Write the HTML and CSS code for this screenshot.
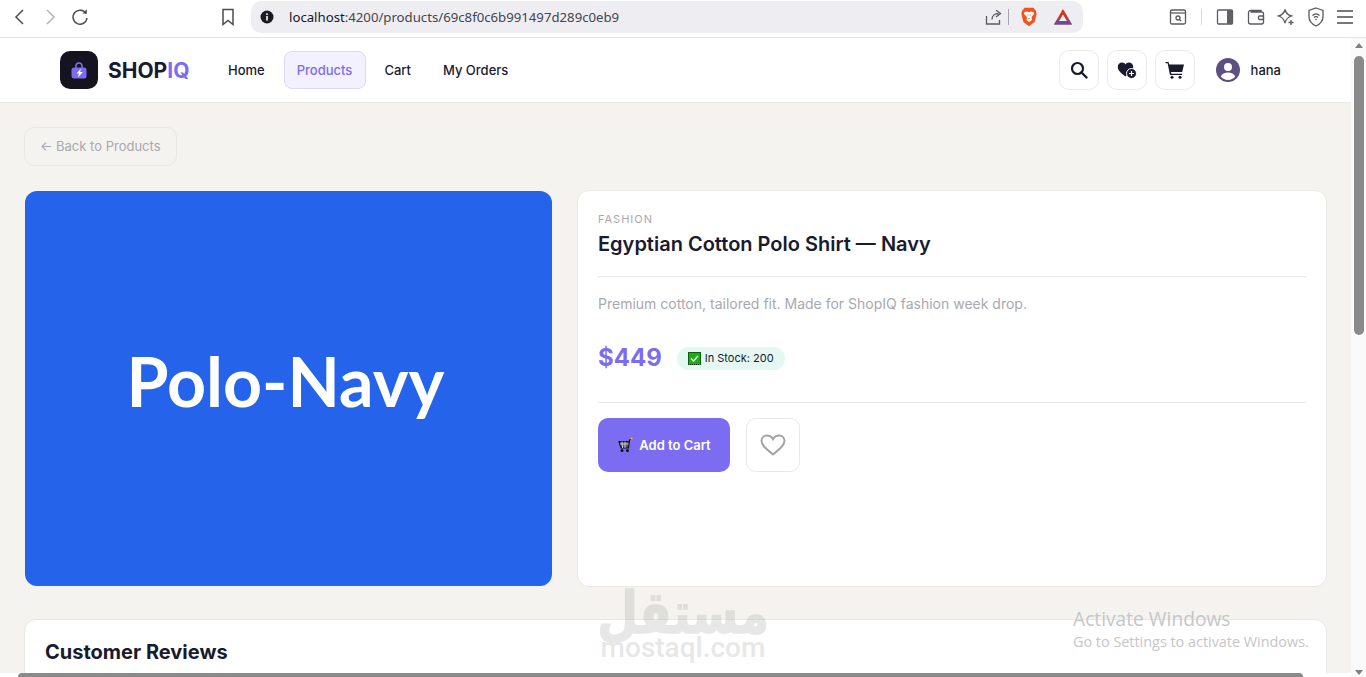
FILE: index.html
```html
<!DOCTYPE html>
<html lang="en">
<head>
<meta charset="utf-8">
<title>ShopIQ</title>
<link rel="stylesheet" href="styles.css">
</head>
<body>
<div class="toolbar">
  <div class="tb-left">
    <svg class="tb-ic" width="16" height="18" viewBox="0 0 16 18"><path d="M11 2 4 9l7 7" class="st-dark"/></svg>
    <svg class="tb-ic" width="16" height="18" viewBox="0 0 16 18"><path d="m5 2 7 7-7 7" class="st-light"/></svg>
    <svg class="tb-ic" width="20" height="20" viewBox="0 0 20 20"><path d="M16 6.500A7 7 0 1 0 17 11" class="st-dark"/><path d="M12.500 6.500h4.300v-4.300z" class="fill-dark"/></svg>
  </div>
  <svg class="tb-bookmark" width="16" height="18" viewBox="0 0 16 18"><path d="M3 1.500h10v15l-5-4-5 4z" class="st-dark"/></svg>
  <div class="urlbar">
    <svg class="info" width="14" height="14" viewBox="0 0 14 14"><circle cx="7" cy="7" r="6.500" fill="#1b1b22"/><rect x="6.200" y="6" width="1.600" height="4.500" fill="#fff"/><rect x="6.200" y="3.400" width="1.600" height="1.600" fill="#fff"/></svg>
    <span class="url">localhost<span class="url-dim">:4200/products/69c8f0c6b991497d289c0eb9</span></span>
    <svg class="share" width="18" height="18" viewBox="0 0 18 18"><path d="M7 11.500C7 8 9.500 5.500 13.500 5.500M11 2.200l4.500 3.300L11 9M1.500 8v8h13v-4" class="st-gray"/></svg>
    <span class="tb-sep"></span>
    <svg class="brave" width="16" height="20" viewBox="0 0 16 20"><path d="M3.500.8h9L15 4l.6 3-2 8-5.600 4.200L2.400 15l-2-8L1 4z" fill="#f1531f"/><path d="M3.500 5 6 4.500l2 .8 2-.8 2.500.5.500 2-2.500 3 .5 3L8 15l-2.500-2 .5-3L3 7z" fill="#fff"/><path d="M6.300 7.500h1v1h-1zM8.700 7.500h1v1h-1zM7 11h2l-1 1.200z" fill="#f1531f"/></svg>
    <svg class="bat" width="20" height="18" viewBox="0 0 20 18"><path d="M10 1 19 16.500H1z" fill="#c9381c"/><path d="M1 16.500 4 12h12l3 4.500z" fill="#5f4f9e"/><path d="M10 6.500 14 13H6z" fill="#eeedf2"/></svg>
  </div>
  <div class="tb-right">
    <svg width="18" height="18" viewBox="0 0 18 18"><rect x="1.500" y="2" width="15" height="14" rx="1.500" class="st-gray"/><path d="M1.500 5h15" class="st-gray"/><circle cx="9" cy="10" r="2" class="st-gray"/><path d="m10.500 11.500 1.500 1.500" class="st-gray"/></svg>
    <span class="tb-sep light"></span>
    <svg class="tb-panel" width="18" height="18" viewBox="0 0 18 18"><rect x="1.500" y="2" width="15" height="14" rx="1" class="st-gray"/><rect x="11" y="2" width="5.500" height="14" fill="#606066"/></svg>
    <svg width="18" height="18" viewBox="0 0 18 18"><path d="M14 4V2.500H3.500a2 2 0 0 0-2 2V14a2 2 0 0 0 2 2h11a2 2 0 0 0 2-2V6a2 2 0 0 0-2-2H3.500" class="st-gray"/><rect x="11.500" y="8" width="5" height="3.500" rx="1" class="st-gray"/></svg>
    <svg width="18" height="18" viewBox="0 0 18 18"><path d="M8 1.500c.8 4 2.500 5.500 6.500 6.500-3.500 1-5.500 2.800-6.500 7-1-4.200-3-6-6.500-7C5.500 7 7.200 5.500 8 1.500z" class="st-gray"/><path d="M14 12v5M11.500 14.500h5" class="st-gray"/></svg>
    <svg width="18" height="20" viewBox="0 0 18 20"><path d="M9 1 16 3.500V10c0 4-3 7-7 9-4-2-7-5-7-9V3.500z" class="st-gray"/><path d="M5.500 8.500c2-2 5-2 7 0M7 10.500c1-1 3-1 4 0" class="st-gray"/><circle cx="9" cy="12.500" r=".8" fill="#55555c"/></svg>
    <svg class="tb-menu" width="18" height="16" viewBox="0 0 18 16"><path d="M1 2h16M1 8h16M1 14h16" class="st-gray wide"/></svg>
  </div>
</div>

<div class="viewport">
  <div class="page-col">
    <div class="page">
      <header class="nav">
        <div class="logo-wrap">
          <div class="logo-box">
            <svg width="18" height="18" viewBox="0 0 18 18"><path d="M6 7V5a3 3 0 0 1 6 0v2" fill="none" stroke="#7c6cf2" stroke-width="1.600"/><rect x="1.500" y="6.500" width="15" height="11" rx="2.500" fill="#7c6cf2"/><path d="M11 7.500 6.500 12.500H9l-1 4 4.800-5.500H10z" fill="#fff"/></svg>
          </div>
          <span class="logo-text">SHOP<span class="logo-iq">IQ</span></span>
        </div>
        <nav class="links">
          <a class="link">Home</a>
          <a class="link active">Products</a>
          <a class="link">Cart</a>
          <a class="link">My Orders</a>
        </nav>
        <div class="nav-right">
          <button class="icon-btn"><svg width="18" height="18" viewBox="0 0 18 18"><circle cx="7.500" cy="7.500" r="5.500" fill="none" stroke="#1a1a2e" stroke-width="2.200"/><path d="m11.500 11.500 5 5" stroke="#1a1a2e" stroke-width="2.400" stroke-linecap="round"/></svg></button>
          <button class="icon-btn"><svg width="20" height="18" viewBox="0 0 20 18"><path d="M8.500 15.500C3 11.500.8 9 .8 5.800.8 3.300 2.700 1.500 5 1.500c1.500 0 2.700.7 3.500 1.900.8-1.200 2-1.900 3.500-1.900 2.300 0 4.200 1.800 4.200 4.300 0 3.200-2.200 5.700-7.700 9.700z" fill="#1a1a2e"/><circle cx="14.500" cy="12.500" r="5" fill="#1a1a2e" stroke="#fff" stroke-width="1"/><path d="M14.500 10v5M12 12.500h5" stroke="#fff" stroke-width="1.200"/></svg></button>
          <button class="icon-btn"><svg width="20" height="18" viewBox="0 0 20 18"><path d="M.5 1H3.500l.8 2.500H19l-1.800 7.500H6l.4 1.700H17v1.300H5L2.600 2.300H.5z" fill="#1a1a2e"/><circle cx="7" cy="16.300" r="1.500" fill="#1a1a2e"/><circle cx="15" cy="16.300" r="1.500" fill="#1a1a2e"/></svg></button>
          <div class="user">
            <svg width="24" height="24" viewBox="0 0 24 24"><circle cx="12" cy="12" r="12" fill="#5b5080"/><circle cx="12" cy="9" r="4" fill="#fff"/><path d="M4.800 18.500c1.500-3 4-4 7.200-4s5.700 1 7.200 4A9.500 9.500 0 0 1 12 22a9.500 9.500 0 0 1-7.200-3.500z" fill="#fff"/></svg>
            <span class="user-name">hana</span>
          </div>
        </div>
      </header>
      <main class="content">
        <a class="back">← Back to Products</a>
        <section class="product">
          <div class="hero"><span class="hero-text">Polo-Navy</span></div>
          <div class="card info-card">
            <div class="cat">FASHION</div>
            <h1 class="title">Egyptian Cotton Polo Shirt — Navy</h1>
            <hr class="rule rule-a">
            <p class="desc">Premium cotton, tailored fit. Made for ShopIQ fashion week drop.</p>
            <div class="price-row">
              <span class="price">$449</span>
              <span class="stock"><svg class="check" width="13" height="13" viewBox="0 0 13 13"><rect width="13" height="13" fill="#19b012"/><path d="M0 12.500h13" stroke="#111" stroke-dasharray="1 1"/><path d="M0 .5h13M.5 0v13M12.500 0v13" stroke="#0b5f08"/><path d="m3 6.500 2.500 2.500L10 4" fill="none" stroke="#fff" stroke-width="1.400"/></svg>In Stock: 200</span>
            </div>
            <hr class="rule rule-b">
            <div class="actions">
              <button class="add"><svg width="16" height="16" viewBox="0 0 16 16"><path d="M15 1.500 12.500 3 11.500 11H4L2 4.500h9.500" fill="#56576a" stroke="#111" stroke-width="1.200"/><path d="M3 7h8.500M5 4.500 5.500 11M8 4.500V11" stroke="#ddd" stroke-width=".8"/><circle cx="5" cy="13.500" r="1.500" fill="#111"/><circle cx="10.500" cy="13.500" r="1.500" fill="#111"/><circle cx="14.500" cy="1.500" r="1.200" fill="#f0a040"/></svg>Add to Cart</button>
              <button class="wish"><svg width="26" height="24" viewBox="0 0 26 24"><path d="M13 21.500C5 15 1.500 12 1.500 7.800 1.500 4.500 4 2.500 7 2.500c2.500 0 4.700 1.400 6 3.700 1.300-2.300 3.500-3.700 6-3.700 3 0 5.500 2 5.500 5.300 0 4.200-3.500 7.200-11.500 13.700z" fill="none" stroke="#a3a3a3" stroke-width="2"/></svg></button>
            </div>
          </div>
        </section>
        <section class="card reviews">
          <h2 class="reviews-title">Customer Reviews</h2>
        </section>
      </main>
    </div>
    <div class="hbar"><span class="hbar-left"></span><span class="hthumb"></span><span class="hbar-right"></span></div>
  </div>
  <div class="vbar"><span class="varrow up"></span><span class="vthumb"></span><span class="vspace"></span><span class="varrow down"></span></div>
  <div class="watermark">
    <div class="wm-ar" lang="ar" dir="rtl">مستقل</div>
    <div class="wm-en">mostaql.com</div>
  </div>
  <div class="activate">
    <div class="act-1">Activate Windows</div>
    <div class="act-2">Go to Settings to activate Windows.</div>
  </div>
</div>
</body>
</html>
```

FILE: styles.css
```css
* { box-sizing: border-box; }
html, body { margin: 0; height: 100%; overflow: hidden; }
body { width: 1366px; height: 677px; display: flex; flex-direction: column; background: #fff; font-family: Inter, "Liberation Sans", sans-serif; color: #1a1a2e; }

.toolbar { height: 38px; flex: none; display: flex; align-items: center; background: #fff; border-bottom: 1px solid #e3e3e6; padding-bottom: 4px; position: relative; }
.tb-left { display: flex; align-items: center; gap: 14px; margin-left: 12px; width: 208px; }
.tb-left .tb-ic:last-child { margin-left: -2px; }
.tb-bookmark { margin-right: 15px; flex: none; }
.st-dark { fill: none; stroke: #4c4c52; stroke-width: 1.500; }
.st-light { fill: none; stroke: #b4b4b8; stroke-width: 1.500; }
.st-gray { fill: none; stroke: #5a5a60; stroke-width: 1.300; }
.st-gray.wide { stroke-width: 2; stroke: #77777c; }
.fill-dark { fill: #4c4c52; }
.urlbar { width: 832px; height: 32px; background: #eeedf2; border-radius: 10px; display: flex; align-items: center; padding: 0 10px 0 9px; flex: none; }
.info { flex: none; margin-right: 15px; }
.url { font-family: "Noto Sans", "Liberation Sans", sans-serif; font-size: 13.200px; color: #17171c; flex: 1; }
.url-dim { color: #45454c; }
.share { flex: none; margin-right: 5px; }
.tb-sep { width: 1px; height: 16px; background: #a4a4aa; flex: none; margin-right: 12px; }
.brave { flex: none; margin-right: 16px; }
.bat { flex: none; }
.tb-right { display: flex; align-items: center; margin-left: 86px; gap: 12px; }
.tb-sep.light { background: #d8d8dc; margin: 0 2px; }
.tb-panel { margin-right: 1px; }
.tb-menu { margin-left: -1px; }

.viewport { flex: 1; display: flex; min-height: 0; position: relative; }
.page-col { width: 1351px; flex: none; display: flex; flex-direction: column; min-height: 0; }
.page { flex: 1; min-height: 0; overflow: hidden; background: #f4f3ef; }

.nav { height: 65px; background: #fff; border-bottom: 1px solid #e9e8e5; padding-left: 60px; display: flex; align-items: center; }
.logo-wrap { display: flex; align-items: center; gap: 10px; width: 155px; flex: none; }
.logo-box { width: 38px; height: 38px; border-radius: 10px; background: #14131f; display: flex; align-items: center; justify-content: center; }
.logo-text { font-size: 21px; font-weight: 700; color: #1a1a2e; }
.logo-iq { color: #7c6cf2; }
.links { display: flex; align-items: center; gap: 6px; }
.link { font-size: 13px; font-weight: 500; color: #1a1a2e; padding: 0 12px; height: 38px; display: flex; align-items: center; border-radius: 8px; border: 1px solid transparent; }
.link.active { background: #f3f1ff; border-color: #dcd7fb; color: #7c6cf2; padding-right: 13px; margin-right: -1px; }
.nav-right { margin-left: auto; display: flex; align-items: center; gap: 8px; padding-right: 70px; }
.icon-btn { width: 40px; height: 40px; border: 1px solid #ebeae7; border-radius: 10px; background: #fff; padding: 0; display: flex; align-items: center; justify-content: center; }
.user { display: flex; align-items: center; gap: 11px; margin-left: 13px; }
.user-name { font-size: 13px; font-weight: 500; }

.content { padding: 24px 24px 0 24px; }
.back { display: inline-flex; align-items: center; height: 39px; padding: 0 15px 2px; border: 1px solid #e9e8e5; border-radius: 10px; font-size: 13px; color: #a8a8b0; }
.product { display: grid; grid-template-columns: 528px 750px; gap: 25px; margin-top: 24px; height: 397px; }
.hero { margin: 1px 0; margin-left: 1px; background: #2563eb; border-radius: 12px; display: flex; align-items: center; justify-content: center; }
.hero-text { font-family: Lato, sans-serif; font-weight: 700; font-size: 68px; color: #fff; line-height: 1; padding: 0 6px 15px 0; }
.card { background: #fff; border: 1px solid #e9e8e5; border-radius: 12px; }
.info-card { padding: 20px; display: flex; flex-direction: column; }
.cat { font-size: 11px; font-weight: 400; letter-spacing: 1px; color: #a8a8b0; line-height: 16px; }
.title { font-size: 20px; font-weight: 600; margin: 4px 0 0; line-height: 26px; color: #1a1a2e; }
.rule { border: 0; border-top: 1px solid #e9e8e5; margin: 0; width: 100%; }
.rule-a { margin-top: 19px; }
.desc { font-size: 14px; color: #a8a8b0; margin: 17px 0 0; line-height: 20px; }
.price-row { display: flex; align-items: center; gap: 15px; margin-top: 28px; height: 30px; }
.price { font-size: 24px; font-weight: 700; color: #7c6cf2; }
.stock { display: inline-flex; align-items: center; gap: 4px; height: 23px; margin-top: 2px; padding: 0 11px; background: #e5f7f2; border-radius: 12px; font-size: 11px; font-weight: 400; color: #1a1a2e; }
.check { flex: none; }
.rule-b { margin-top: 30px; }
.actions { display: flex; gap: 16px; margin-top: 15px; }
.add { width: 132px; height: 54px; background: #7c6cf2; border: 0; border-radius: 10px; font: 600 13px Inter, sans-serif; color: #fff; display: flex; align-items: center; justify-content: center; gap: 6px; padding: 0; }
.wish { width: 54px; height: 54px; background: #fff; border: 1px solid #e9e8e5; border-radius: 10px; padding: 0; display: flex; align-items: center; justify-content: center; }
.reviews { margin-top: 32px; padding: 20px; height: 200px; width: 1303px; }
.reviews-title { font-size: 20px; font-weight: 700; margin: 0; line-height: 24px; color: #1a1a2e; }

.hbar { height: 4px; flex: none; background: #fff; display: flex; }
.hbar-left { width: 18px; flex: none; }
.hthumb { width: 1285px; background: #8a8a8a; border-radius: 4px 4px 0 0; }
.vbar { width: 15px; flex: none; background: #fafafa; display: flex; flex-direction: column; align-items: center; padding: 5px 0 2px; }
.varrow { width: 0; height: 0; border-left: 4.500px solid transparent; border-right: 4.500px solid transparent; flex: none; }
.varrow.up { border-bottom: 5px solid #7f7f7f; }
.varrow.down { border-top: 5px solid #7f7f7f; }
.vthumb { width: 10px; height: 279px; margin-top: 8px; background: #8a8a8a; border-radius: 5px; flex: none; }
.vspace { flex: 1; }

.watermark { position: absolute; left: 600px; top: 546px; width: 166px; text-align: center; color: #8c8c8c; opacity: .2; pointer-events: none; display: flex; flex-direction: column; align-items: center; }
.wm-ar { font-family: "Noto Sans", "DejaVu Sans", sans-serif; font-size: 58px; font-weight: 700; line-height: 50px; height: 50px; white-space: nowrap; transform: translateY(2px) scaleX(.81); -webkit-text-stroke: 1.500px #8c8c8c; }
.wm-en { font-family: Roboto, sans-serif; font-size: 28px; line-height: 28px; font-weight: 500; }
.activate { position: absolute; left: 1073px; top: 569px; color: #c6c6c6; font-family: "Open Sans", sans-serif; pointer-events: none; }
.act-1 { font-size: 19.200px; line-height: 24px; }
.act-2 { font-size: 14.400px; line-height: 21px; }
```
